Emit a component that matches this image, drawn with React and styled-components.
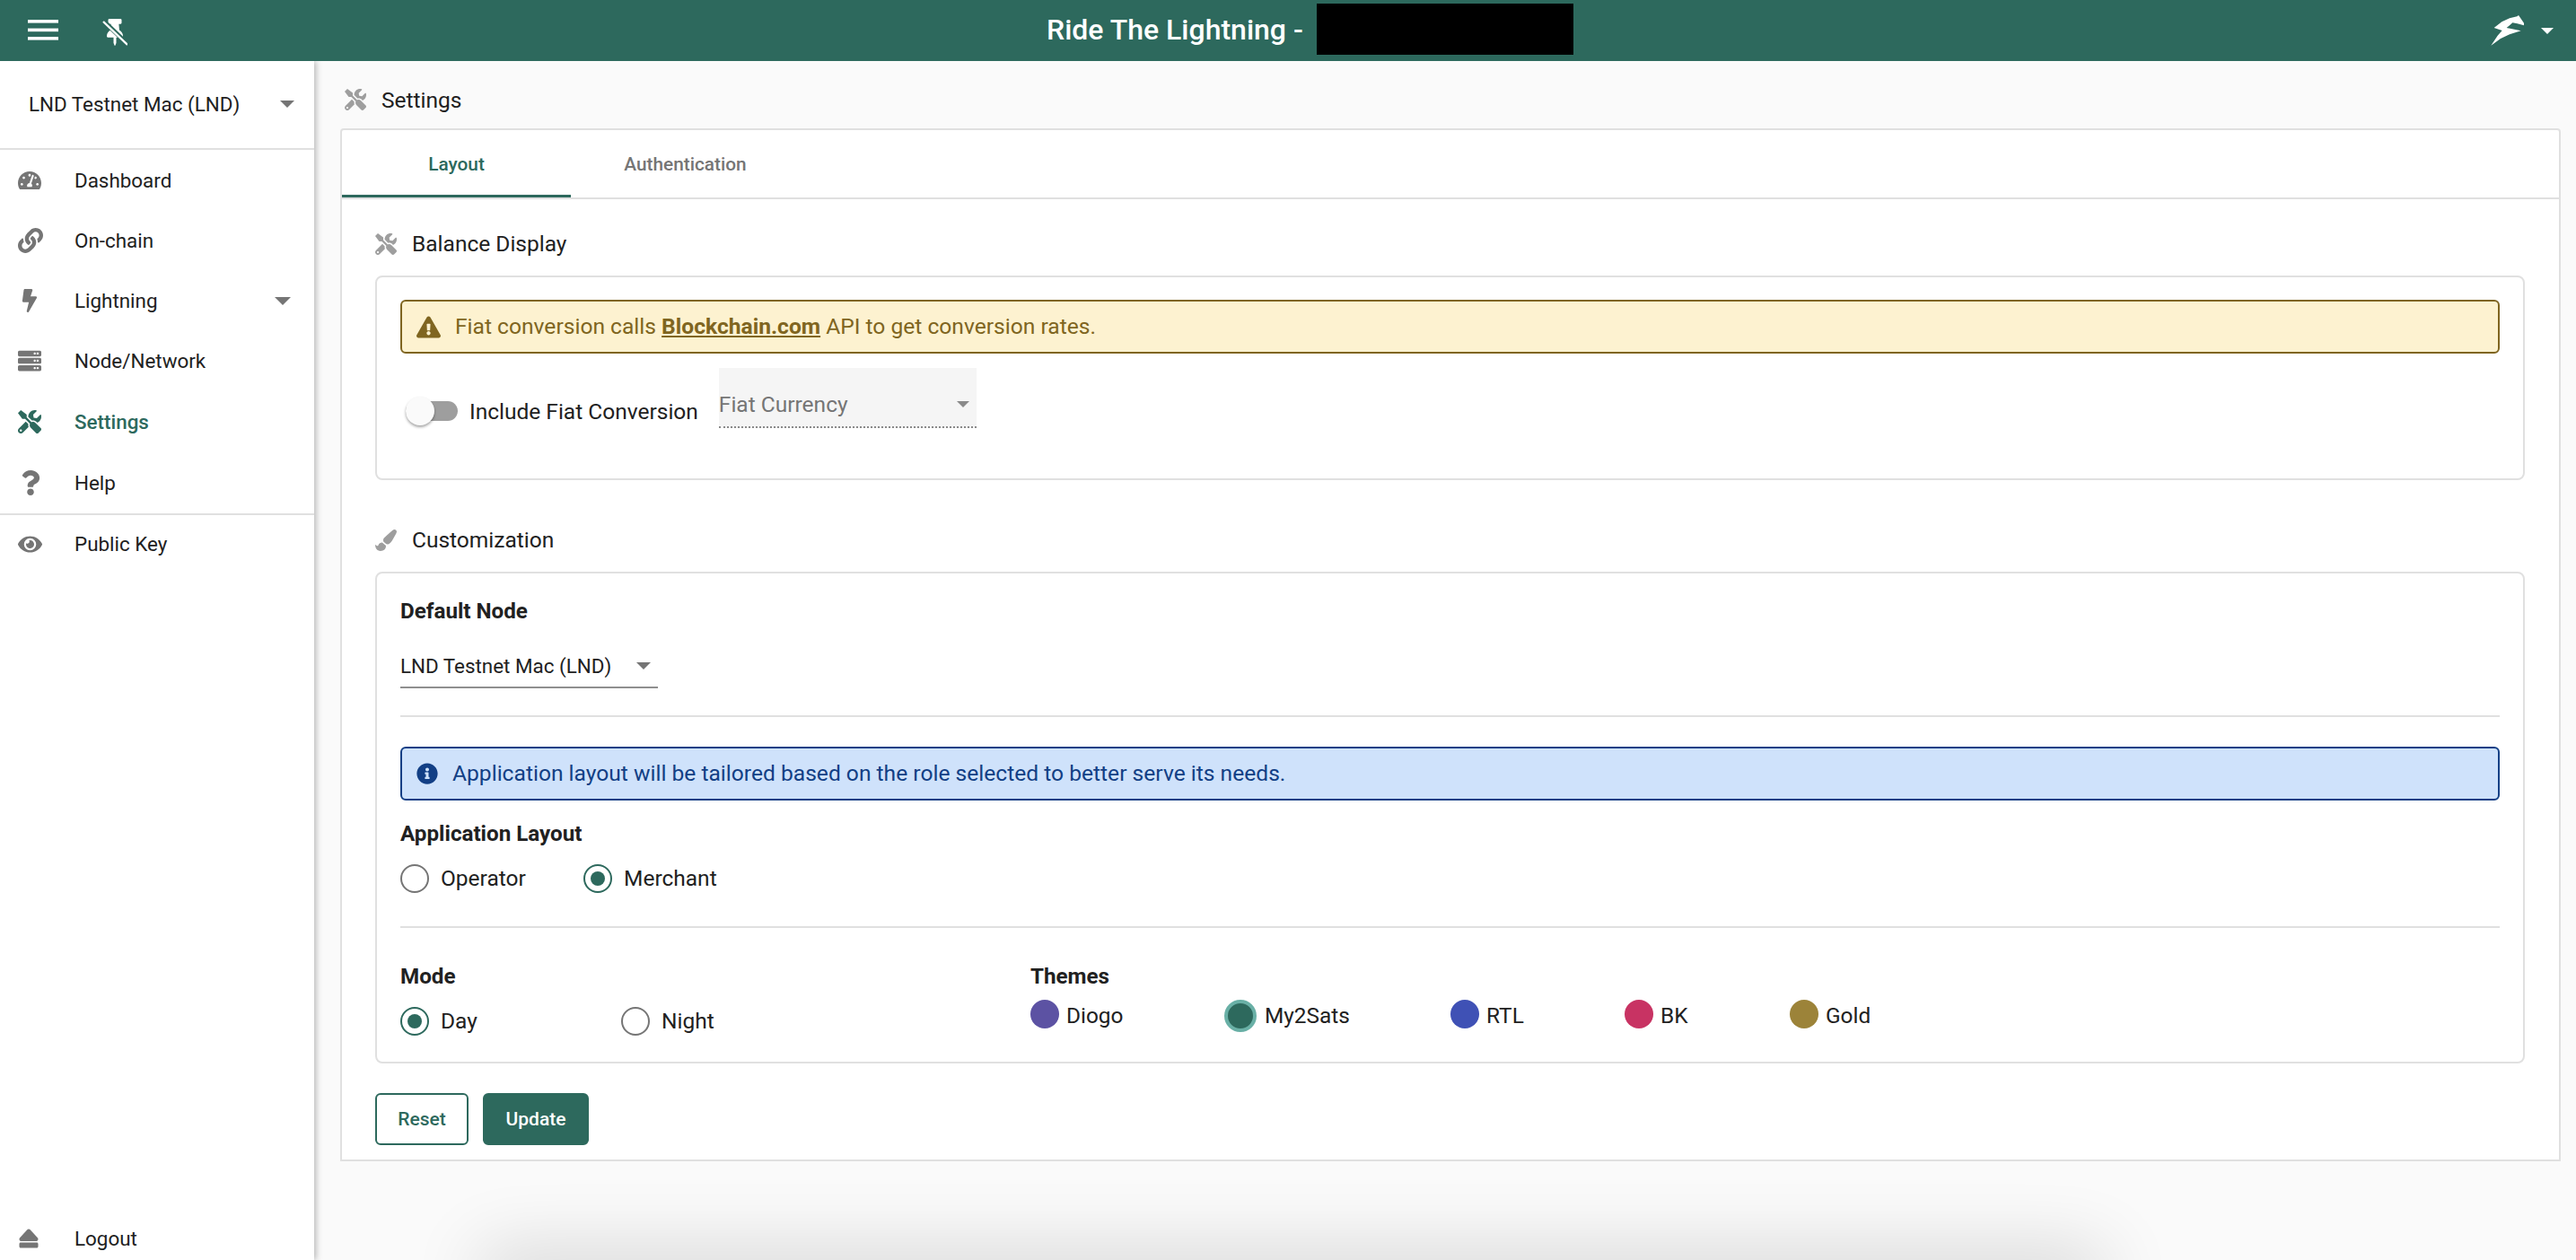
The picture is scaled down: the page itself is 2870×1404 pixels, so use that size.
import React from 'react';
import styled, { createGlobalStyle } from 'styled-components';
import {
  FaTachometerAlt, FaLink, FaBolt, FaServer, FaTools, FaQuestion, FaEye, FaEject,
  FaPaintBrush, FaExclamationTriangle, FaInfoCircle,
} from 'react-icons/fa';

const GREEN = '#2d695d';
const LINE = '#e0e0e0';

const GlobalStyle = createGlobalStyle`
  html, body { margin: 0; padding: 0; background: #fafafa; }
  body { font-family: Roboto, "Liberation Sans", sans-serif; color: #212121; }
  * { box-sizing: border-box; }
`;

const Page = styled.div`
  display: flex;
  flex-direction: column;
  height: 1404px;
  overflow: hidden;
  position: relative;
`;

const Toolbar = styled.header`
  display: flex;
  align-items: center;
  flex: 0 0 68px;
  background: ${GREEN};
  color: #fff;
  padding: 0 25px 0 31px;
  position: relative;
  z-index: 3;
`;

const ToolIcons = styled.div`
  display: flex;
  align-items: center;
  gap: 49px;
  width: 1135px;
`;

const Title = styled.div`
  display: flex;
  align-items: center;
  gap: 15px;
  font-size: 32px;
  font-weight: 500;
  span { margin-top: -3px; }
`;

const Redacted = styled.div`
  width: 286px;
  height: 57px;
  background: #000;
  margin-top: -3px;
`;

const UserMenu = styled.div`
  display: flex;
  align-items: center;
  gap: 18px;
  margin-left: auto;
`;

const Caret = styled.span`
  display: inline-block;
  width: 0;
  height: 0;
  border-left: ${p => p.$w / 2}px solid transparent;
  border-right: ${p => p.$w / 2}px solid transparent;
  border-top: ${p => p.$w / 2}px solid ${p => p.$color || '#757575'};
`;

const Body = styled.div`
  display: flex;
  flex: 1;
  min-height: 0;
`;

const Sidebar = styled.aside`
  display: flex;
  flex-direction: column;
  flex: 0 0 350px;
  background: #fff;
  box-shadow: 2px 0 7px rgba(0, 0, 0, 0.28);
  position: relative;
  z-index: 2;
`;

const NodePicker = styled.div`
  display: flex;
  align-items: center;
  justify-content: space-between;
  height: 99px;
  padding: 0 22px 2px 32px;
  font-size: 22.4px;
  border-bottom: 2px solid ${LINE};
`;

const NavList = styled.nav`
  display: flex;
  flex-direction: column;
`;

const NavRow = styled.div`
  display: flex;
  align-items: center;
  height: ${p => p.$h || 67.4}px;
  padding: 0 26px 0 20px;
  font-size: 22.4px;
  color: ${p => (p.$active ? GREEN : '#212121')};
  font-weight: ${p => (p.$active ? 500 : 400)};
  border-bottom: ${p => (p.$ruled ? `2px solid ${LINE}` : 'none')};
`;

const NavIcon = styled.span`
  display: flex;
  align-items: center;
  flex: 0 0 63px;
  color: ${p => (p.$active ? GREEN : '#757575')};
  svg { height: ${p => p.$size}px; width: auto; }
`;

const NavCaret = styled.span`
  display: flex;
  margin-left: auto;
`;

const LogoutSlot = styled.div`
  margin-top: auto;
`;

const Main = styled.main`
  flex: 1;
  min-width: 0;
  padding: 0 17px 0 29px;
  position: relative;
`;

const PageTitle = styled.div`
  display: flex;
  align-items: center;
  gap: 17px;
  height: 75px;
  padding: 11px 0 0 5px;
  font-size: 24.5px;
  svg { width: 24px; height: 24px; color: #9e9e9e; }
`;

const Card = styled.section`
  background: #fff;
  border: 2px solid ${LINE};
  border-radius: 4px 4px 0 0;
  height: 1151px;
`;

const TabBar = styled.div`
  display: flex;
  height: 77px;
  border-bottom: 2px solid ${LINE};
`;

const Tab = styled.div`
  display: flex;
  align-items: center;
  justify-content: center;
  width: 255px;
  height: 75px;
  padding-top: ${p => (p.$active ? 3 : 1)}px;
  font-size: 20.8px;
  font-weight: 500;
  color: ${p => (p.$active ? GREEN : '#757575')};
  border-bottom: ${p => (p.$active ? `3px solid ${GREEN}` : 'none')};
  margin-bottom: -2px;
`;

const Content = styled.div`
  padding: 33px 38px 0 37px;
`;

const SectionHead = styled.div`
  display: flex;
  align-items: center;
  gap: 17px;
  height: 34px;
  margin-top: ${p => p.$top || 0}px;
  margin-bottom: 18px;
  font-size: 24.5px;
  svg { width: 24px; height: 24px; color: #9e9e9e; }
`;

const HeadText = styled.span`
  margin-top: -2px;
`;

const Panel = styled.div`
  border: 2px solid ${LINE};
  border-radius: 8px;
  padding: 25px 26px ${p => p.$bottom}px;
`;

const Alert = styled.div`
  display: flex;
  align-items: center;
  height: ${p => p.$h}px;
  padding: 0 16px;
  gap: 16px;
  font-size: 24.6px;
  color: ${p => p.$ink};
  background: ${p => p.$bg};
  border: 2px solid ${p => p.$ink};
  border-radius: 6px;
  margin-top: ${p => p.$top || 0}px;
  svg { flex: none; width: ${p => p.$icon}px; height: ${p => p.$icon}px; }
  span { margin-top: -2px; }
  a { color: inherit; font-weight: 700; text-decoration: underline; }
`;

const FiatRow = styled.div`
  display: flex;
  align-items: flex-end;
  gap: 23px;
  margin-top: 16px;
  padding-left: 6px;
`;

const ToggleWrap = styled.label`
  display: flex;
  align-items: center;
  gap: 13px;
  height: 34px;
  margin-bottom: 2px;
  font-size: 24.5px;
`;

const ToggleTrack = styled.span`
  display: block;
  position: relative;
  width: 58px;
  height: 22px;
  background: #9e9e9e;
  border-radius: 11px;
`;

const ToggleKnob = styled.span`
  position: absolute;
  left: 0;
  top: -5px;
  width: 32px;
  height: 32px;
  background: #fafafa;
  border-radius: 50%;
  box-shadow: 0 2px 3px rgba(0, 0, 0, 0.35);
`;

const FiatSelect = styled.div`
  display: flex;
  align-items: center;
  justify-content: space-between;
  width: 287px;
  height: 67px;
  padding: 16px 8px 0 0;
  font-size: 24.5px;
  color: #757575;
  background: #f5f5f5;
  border-bottom: 2px dotted #8a8a8a;
`;

const FieldLabel = styled.div`
  height: 34px;
  line-height: 34px;
  font-size: 24.2px;
  font-weight: 700;
  margin-top: ${p => p.$top || 0}px;
`;

const NodeSelect = styled.div`
  display: flex;
  align-items: center;
  justify-content: space-between;
  width: 287px;
  height: 53px;
  margin-top: 16px;
  padding: 11px 8px 6px 0;
  font-size: 22.4px;
  line-height: 34px;
  border-bottom: 2px solid #8f8f8f;
`;

const Rule = styled.hr`
  height: 2px;
  margin: ${p => p.$top}px 0 0;
  border: 0;
  background: ${LINE};
`;

const RadioRow = styled.div`
  display: flex;
  margin-top: ${p => p.$top}px;
`;

const RadioItem = styled.label`
  display: flex;
  align-items: center;
  gap: 13px;
  width: ${p => p.$w}px;
  height: 32px;
  font-size: 24.5px;
`;

const RadioText = styled.span`
  margin-top: -2px;
`;

const RadioMark = styled.span`
  display: flex;
  align-items: center;
  justify-content: center;
  width: 32px;
  height: 32px;
  border: 2px solid ${p => (p.$on ? GREEN : '#757575')};
  border-radius: 50%;
  &::after {
    content: '';
    display: ${p => (p.$on ? 'block' : 'none')};
    width: 16px;
    height: 16px;
    border-radius: 50%;
    background: ${GREEN};
  }
`;

const ModeGrid = styled.div`
  display: grid;
  grid-template-columns: 702px 1fr;
  margin-top: 37px;
`;

const ThemeRow = styled.div`
  display: flex;
  margin-top: 9px;
`;

const ThemeItem = styled.div`
  display: flex;
  align-items: flex-start;
  gap: ${p => (p.$on ? 9 : 8)}px;
  width: ${p => p.$w}px;
  font-size: 24.4px;
  line-height: 36px;
`;

const Swatch = styled.span`
  flex: none;
  width: ${p => (p.$on ? 36 : 32)}px;
  height: ${p => (p.$on ? 36 : 32)}px;
  border-radius: 50%;
  background: ${p => p.$color};
  border: ${p => (p.$on ? '4px solid #69b0a6' : 'none')};
`;

const Actions = styled.div`
  display: flex;
  gap: 16px;
  margin-top: 33px;
`;

const Button = styled.button`
  height: 58px;
  width: ${p => p.$w}px;
  padding: 0;
  font-family: inherit;
  font-size: 21px;
  font-weight: 500;
  color: ${p => (p.$solid ? '#fff' : GREEN)};
  background: ${p => (p.$solid ? GREEN : '#fff')};
  border: 2px solid ${GREEN};
  border-radius: 6px;
`;

const FooterShadow = styled.div`
  position: absolute;
  left: 200px;
  right: 540px;
  bottom: -34px;
  height: 30px;
  box-shadow: 0 0 80px 14px rgba(0, 0, 0, 0.16);
`;

const MenuGlyph = () => (
  <svg width="34" height="24" viewBox="0 0 34 24" fill="#fff">
    <rect y="0" width="34" height="3.6" />
    <rect y="9.6" width="34" height="3.6" />
    <rect y="19" width="34" height="3.6" />
  </svg>
);

const PinOffGlyph = () => (
  <svg width="28" height="34" viewBox="0 0 28 34">
    <g transform="translate(5 4) scale(0.0469 0.0586)">
      <path
        fill="#fff"
        d="M298.028 214.267L285.793 96H328c13.255 0 24-10.745 24-24V24c0-13.255-10.745-24-24-24H56C42.745 0 32 10.745 32 24v48c0 13.255 10.745 24 24 24h42.207L85.972 214.267C37.465 236.82 0 277.261 0 328c0 13.255 10.745 24 24 24h136v104.007c0 1.242.289 2.467.845 3.578l24 48c2.941 5.882 11.364 5.893 14.311 0l24-48a8.008 8.008 0 0 0 .845-3.578V352h136c13.255 0 24-10.745 24-24-.001-51.183-37.983-91.42-85.973-113.733z"
      />
    </g>
    <path d="M1 6 L28 32" stroke={GREEN} strokeWidth="5" />
    <path d="M1 7 L28 33" stroke="#fff" strokeWidth="2.4" />
  </svg>
);

const LogoGlyph = () => (
  <svg width="38" height="34" viewBox="378 48 112 102">
    <path
      fill="#fff"
      d="M378 149 L400 116 L415 99 L388 90 L414 70 L440 58 L465 52 L470 48 L488 74 L488 82 L466 76 L450 73 L440 82 L430 90 L478 100 L440 112 L410 126 Z"
    />
  </svg>
);

const navItems = [
  { label: 'Dashboard', Icon: FaTachometerAlt, size: 26, h: 67 },
  { label: 'On-chain', Icon: FaLink, size: 28 },
  { label: 'Lightning', Icon: FaBolt, size: 26, caret: true },
  { label: 'Node/Network', Icon: FaServer, size: 26 },
  { label: 'Settings', Icon: FaTools, size: 26, active: true },
  { label: 'Help', Icon: FaQuestion, size: 28, ruled: true, h: 70 },
  { label: 'Public Key', Icon: FaEye, size: 27, h: 65 },
];

const themes = [
  { name: 'Diogo', color: '#5c52a3', w: 216 },
  { name: 'My2Sats', color: GREEN, w: 252, on: true },
  { name: 'RTL', color: '#3f51b5', w: 194 },
  { name: 'BK', color: '#c83363', w: 184 },
  { name: 'Gold', color: '#9c8339', w: 120 },
];

function App() {
  return (
    <Page>
      <GlobalStyle />
      <Toolbar>
        <ToolIcons>
          <MenuGlyph />
          <PinOffGlyph />
        </ToolIcons>
        <Title>
          <span>Ride The Lightning -</span>
          <Redacted />
        </Title>
        <UserMenu>
          <LogoGlyph />
          <Caret $w={14} $color="#fff" />
        </UserMenu>
      </Toolbar>
      <Body>
        <Sidebar>
          <NodePicker>
            LND Testnet Mac (LND)
            <Caret $w={16} />
          </NodePicker>
          <NavList>
            {navItems.map(({ label, Icon, size, caret, active, ruled, h }) => (
              <NavRow key={label} $active={active} $ruled={ruled} $h={h}>
                <NavIcon $size={size} $active={active}><Icon /></NavIcon>
                {label}
                {caret && <NavCaret><Caret $w={18} /></NavCaret>}
              </NavRow>
            ))}
          </NavList>
          <LogoutSlot>
            <NavRow $h={48}>
              <NavIcon $size={24}><FaEject /></NavIcon>
              Logout
            </NavRow>
          </LogoutSlot>
        </Sidebar>
        <Main>
          <PageTitle><FaTools />Settings</PageTitle>
          <Card>
            <TabBar>
              <Tab $active>Layout</Tab>
              <Tab>Authentication</Tab>
            </TabBar>
            <Content>
              <SectionHead><FaTools /><HeadText>Balance Display</HeadText></SectionHead>
              <Panel $bottom={56}>
                <Alert $h={60} $icon={27} $ink="#7f6520" $bg="#fdf2d0">
                  <FaExclamationTriangle />
                  <span>Fiat conversion calls <a>Blockchain.com</a> API to get conversion rates.</span>
                </Alert>
                <FiatRow>
                  <ToggleWrap>
                    <ToggleTrack><ToggleKnob /></ToggleTrack>
                    Include Fiat Conversion
                  </ToggleWrap>
                  <FiatSelect>
                    Fiat Currency
                    <Caret $w={14} $color="#8a8a8a" />
                  </FiatSelect>
                </FiatRow>
              </Panel>
              <SectionHead $top={50}><FaPaintBrush /><HeadText>Customization</HeadText></SectionHead>
              <Panel $bottom={29}>
                <FieldLabel>Default Node</FieldLabel>
                <NodeSelect>
                  LND Testnet Mac (LND)
                  <Caret $w={16} />
                </NodeSelect>
                <Rule $top={30} />
                <Alert $top={33} $h={60} $icon={24} $ink="#123f85" $bg="#cfe2fb">
                  <FaInfoCircle />
                  <span>Application layout will be tailored based on the role selected to better serve its needs.</span>
                </Alert>
                <FieldLabel $top={20}>Application Layout</FieldLabel>
                <RadioRow $top={17}>
                  <RadioItem $w={204}><RadioMark /><RadioText>Operator</RadioText></RadioItem>
                  <RadioItem $w={204}><RadioMark $on /><RadioText>Merchant</RadioText></RadioItem>
                </RadioRow>
                <Rule $top={37} />
                <ModeGrid>
                  <div>
                    <FieldLabel>Mode</FieldLabel>
                    <RadioRow $top={17}>
                      <RadioItem $w={246}><RadioMark $on /><RadioText>Day</RadioText></RadioItem>
                      <RadioItem $w={200}><RadioMark /><RadioText>Night</RadioText></RadioItem>
                    </RadioRow>
                  </div>
                  <div>
                    <FieldLabel>Themes</FieldLabel>
                    <ThemeRow>
                      {themes.map(t => (
                        <ThemeItem key={t.name} $w={t.w} $on={t.on}>
                          <Swatch $color={t.color} $on={t.on} />
                          {t.name}
                        </ThemeItem>
                      ))}
                    </ThemeRow>
                  </div>
                </ModeGrid>
              </Panel>
              <Actions>
                <Button $w={104}>Reset</Button>
                <Button $w={118} $solid>Update</Button>
              </Actions>
            </Content>
          </Card>
          <FooterShadow />
        </Main>
      </Body>
    </Page>
  );
}

export default App;
